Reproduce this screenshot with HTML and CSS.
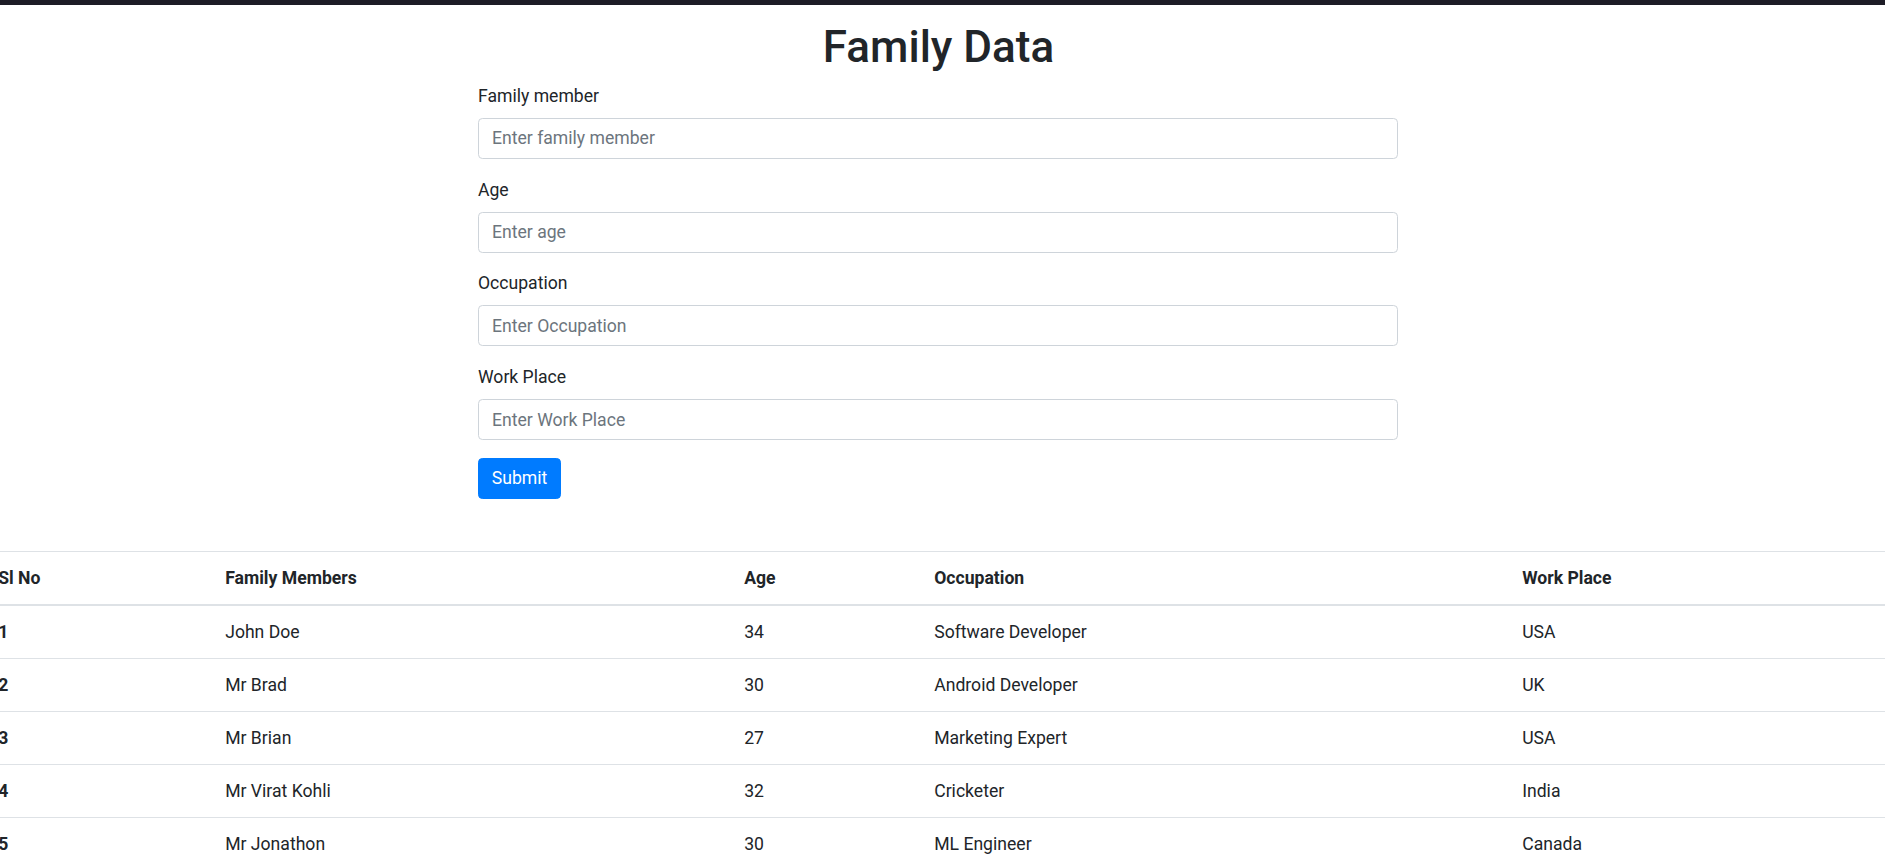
FILE: index.html
```html
<!DOCTYPE html>
<html lang="en">
<head>
<meta charset="utf-8">
<title>Family Data</title>
<link rel="stylesheet" href="styles.css">
</head>
<body>
<div class="topbar"></div>
<h1 class="title">Family Data</h1>
<form class="family-form">
  <div class="form-group">
    <label class="form-label">Family member</label>
    <input class="form-control" type="text" placeholder="Enter family member">
  </div>
  <div class="form-group">
    <label class="form-label">Age</label>
    <input class="form-control" type="text" placeholder="Enter age">
  </div>
  <div class="form-group">
    <label class="form-label">Occupation</label>
    <input class="form-control" type="text" placeholder="Enter Occupation">
  </div>
  <div class="form-group">
    <label class="form-label">Work Place</label>
    <input class="form-control" type="text" placeholder="Enter Work Place">
  </div>
  <button class="btn-submit" type="button">Submit</button>
</form>
<table class="data-table">
  <colgroup>
    <col class="c1"><col class="c2"><col class="c3"><col class="c4"><col class="c5">
  </colgroup>
  <thead>
    <tr><th>Sl No</th><th>Family Members</th><th>Age</th><th>Occupation</th><th>Work Place</th></tr>
  </thead>
  <tbody>
    <tr><th>1</th><td>John Doe</td><td>34</td><td>Software Developer</td><td>USA</td></tr>
    <tr><th>2</th><td>Mr Brad</td><td>30</td><td>Android Developer</td><td>UK</td></tr>
    <tr><th>3</th><td>Mr Brian</td><td>27</td><td>Marketing Expert</td><td>USA</td></tr>
    <tr><th>4</th><td>Mr Virat Kohli</td><td>32</td><td>Cricketer</td><td>India</td></tr>
    <tr><th>5</th><td>Mr Jonathon</td><td>30</td><td>ML Engineer</td><td>Canada</td></tr>
  </tbody>
</table>
</body>
</html>
```
FILE: styles.css
```css
html, body {
  margin: 0;
  padding: 0;
  overflow-x: hidden;
}
body {
  font-family: Roboto, "Liberation Sans", Arial, sans-serif;
  font-size: 17.6px;
  line-height: 1.5;
  color: #212529;
  background: #fff;
}
.topbar {
  height: 5px;
  background: #1d1c26;
}
.title {
  margin: 16px 0 9px;
  padding-right: 8px;
  font-size: 44px;
  font-weight: 500;
  line-height: 1.2;
  text-align: center;
  color: #212529;
}
.family-form {
  width: 920px;
  margin: 0 0 0 478px;
}
.form-group {
  margin-bottom: 17.8px;
}
.form-label {
  display: block;
  line-height: 26px;
  margin-bottom: 9px;
}
.form-control {
  display: block;
  box-sizing: border-box;
  width: 100%;
  height: 41px;
  padding: 6px 13px;
  font-family: inherit;
  font-size: 17.6px;
  color: #495057;
  background: #fff;
  border: 1px solid #ced4da;
  border-radius: 4.4px;
  outline: none;
}
.form-control::placeholder {
  color: #6c757d;
  opacity: 1;
}
.btn-submit {
  display: block;
  box-sizing: border-box;
  height: 41px;
  width: 83px;
  padding: 0;
  margin-top: 2px;
  font-family: inherit;
  font-size: 17.6px;
  color: #fff;
  background: #007bff;
  border: 1px solid #007bff;
  border-radius: 4.4px;
}
.data-table {
  margin-top: 52px;
  margin-left: -15px;
  width: calc(100% + 30px);
  border-collapse: collapse;
  table-layout: fixed;
}
.c1 { width: 227px; }
.c2 { width: 519px; }
.c3 { width: 190px; }
.c4 { width: 588px; }
.c5 { width: auto; }
.data-table th,
.data-table td {
  padding: 13px 13.2px;
  line-height: 26px;
  text-align: left;
  vertical-align: top;
  border-top: 1px solid #dee2e6;
}
.data-table th {
  font-weight: 700;
}
.data-table td {
  font-weight: 400;
}
.data-table thead th {
  border-bottom: 2px solid #dee2e6;
}
```
